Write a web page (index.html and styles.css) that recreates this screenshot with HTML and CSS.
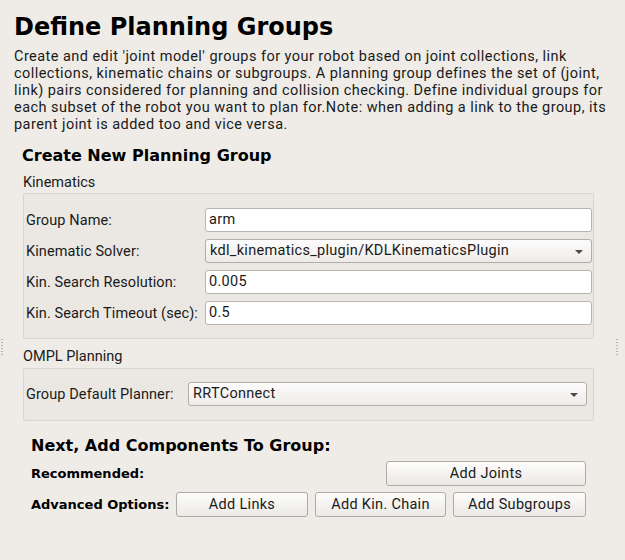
FILE: index.html
```html
<!DOCTYPE html>
<html>
<head>
<meta charset="utf-8">
<link rel="stylesheet" href="styles.css">
</head>
<body>
<div class="page">
  <h1 class="title">Define Planning Groups</h1>
  <div class="desc">
    <div class="desc-line">Create and edit 'joint model' groups for your robot based on joint collections, link</div>
    <div class="desc-line">collections, kinematic chains or subgroups. A planning group defines the set of (joint,</div>
    <div class="desc-line">link) pairs considered for planning and collision checking. Define individual groups for</div>
    <div class="desc-line">each subset of the robot you want to plan for.Note: when adding a link to the group, its</div>
    <div class="desc-line">parent joint is added too and vice versa.</div>
  </div>

  <div class="section">
    <h2 class="heading">Create New Planning Group</h2>
    <div class="group-label">Kinematics</div>
    <div class="frame frame-kin">
      <div class="row">
        <span class="label">Group Name:</span>
        <div class="input">arm</div>
      </div>
      <div class="row">
        <span class="label">Kinematic Solver:</span>
        <div class="combo">kdl_kinematics_plugin/KDLKinematicsPlugin<span class="arrow"></span></div>
      </div>
      <div class="row">
        <span class="label">Kin. Search Resolution:</span>
        <div class="input">0.005</div>
      </div>
      <div class="row">
        <span class="label">Kin. Search Timeout (sec):</span>
        <div class="input">0.5</div>
      </div>
    </div>

    <div class="group-label group-label-ompl">OMPL Planning</div>
    <div class="frame frame-ompl">
      <div class="row row-ompl">
        <span class="label">Group Default Planner:</span>
        <div class="combo combo-ompl">RRTConnect<span class="arrow"></span></div>
      </div>
    </div>

    <div class="components">
      <h2 class="heading heading-next">Next, Add Components To Group:</h2>
      <div class="btn-grid">
        <span class="opt-label">Recommended:</span>
        <button class="btn btn-joints">Add Joints</button>
        <span class="opt-label">Advanced Options:</span>
        <button class="btn">Add Links</button>
        <button class="btn">Add Kin. Chain</button>
        <button class="btn">Add Subgroups</button>
      </div>
    </div>
  </div>

  <div class="splitter splitter-left"></div>
  <div class="splitter splitter-right"></div>
</div>
</body>
</html>
```

FILE: styles.css
```css
html, body {
  margin: 0;
  padding: 0;
  background: #efece8;
}

.page {
  position: relative;
  width: 625px;
  height: 560px;
  box-sizing: border-box;
  padding: 13px 0 0 14px;
  font-family: Roboto, "Liberation Sans", sans-serif;
  font-size: 14.5px;
  color: #1a1a1a;
}

.title {
  margin: 0;
  font-family: "DejaVu Sans", sans-serif;
  font-weight: bold;
  font-size: 24px;
  line-height: 28px;
  color: #000;
}

.desc {
  margin: 7px 0 0 0;
  display: flex;
  flex-direction: column;
  letter-spacing: 0.45px;
}

.desc-line {
  height: 17px;
  line-height: 17px;
  white-space: nowrap;
}

.section {
  margin-left: 8px;
  width: 572px;
}

.heading {
  margin: 13px 0 0 0;
  font-family: "DejaVu Sans", sans-serif;
  font-weight: bold;
  font-size: 16px;
  line-height: 20px;
  color: #000;
}

.group-label {
  margin: 8px 0 0 1px;
  line-height: 17px;
}

.group-label-ompl {
  margin-top: 9px;
}

.frame {
  margin: 2px 0 0 1px;
  width: 571px;
  box-sizing: border-box;
  border: 1px solid #d9d5d0;
  border-radius: 2px;
  background: #ebe8e4;
}

.frame-kin {
  display: flex;
  flex-direction: column;
  gap: 7px;
  padding: 14px 1px 13px 2px;
}

.frame-ompl {
  margin-top: 3px;
  padding: 13px 6px 14px 2px;
}

.row {
  display: flex;
  align-items: center;
  height: 24px;
}

.label {
  width: 179px;
  flex: none;
  white-space: nowrap;
  letter-spacing: 0.1px;
}

.row-ompl .label {
  width: 162px;
}

.input, .combo {
  position: relative;
  flex: 1;
  height: 24px;
  box-sizing: border-box;
  border: 1px solid #b7b3ad;
  border-radius: 3px;
  background: #fff;
  line-height: 22px;
  padding-left: 3px;
  white-space: nowrap;
  letter-spacing: 0.3px;
}

.combo {
  padding-left: 4px;
  border-color: #b1ada7;
  background: linear-gradient(#fdfcfc, #eeece9);
}

.arrow {
  position: absolute;
  right: 8px;
  top: 10px;
  width: 0;
  height: 0;
  border-left: 4px solid transparent;
  border-right: 4px solid transparent;
  border-top: 4px solid #4c4c4c;
}

.components {
  padding-left: 9px;
}

.heading-next {
  margin-top: 15px;
}

.btn-grid {
  margin-top: 5px;
  display: grid;
  grid-template-columns: 138px 132px 131px 133px;
  grid-auto-rows: 25px;
  column-gap: 7px;
  row-gap: 6px;
  align-items: center;
}

.opt-label {
  font-family: "DejaVu Sans", sans-serif;
  font-weight: bold;
  font-size: 13px;
  color: #000;
  white-space: nowrap;
}

.btn {
  height: 25px;
  box-sizing: border-box;
  border: 1px solid #aeaaa4;
  border-radius: 3px;
  background: linear-gradient(#fdfdfc, #ebe9e6);
  font-family: Roboto, "Liberation Sans", sans-serif;
  font-size: 14.5px;
  letter-spacing: 0.3px;
  color: #1a1a1a;
  padding: 0;
}

.btn-joints {
  grid-column: 3 / 5;
  justify-self: end;
  width: 200px;
}

.splitter {
  position: absolute;
  top: 339px;
  width: 2px;
  height: 17px;
  background: repeating-linear-gradient(#b9b4ae 0 1px, transparent 1px 3px);
}

.splitter-left {
  left: 1px;
}

.splitter-right {
  left: 616px;
}
```
